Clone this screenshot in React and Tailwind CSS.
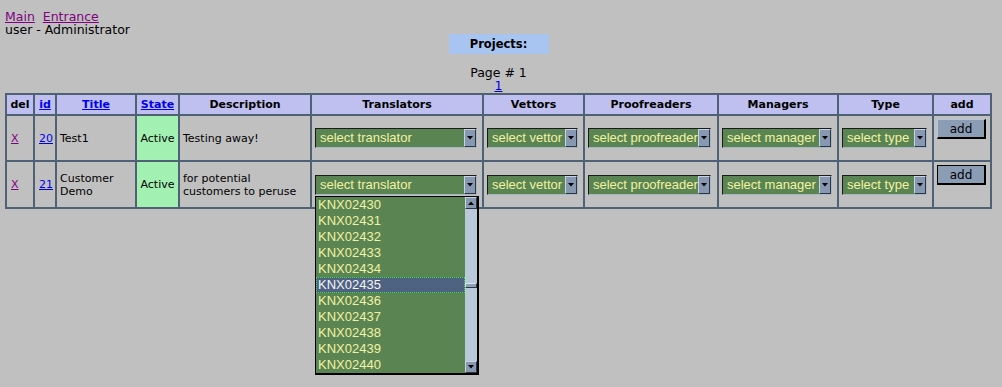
import React from 'react';

const translators = [
  'KNX02430', 'KNX02431', 'KNX02432', 'KNX02433', 'KNX02434', 'KNX02435',
  'KNX02436', 'KNX02437', 'KNX02438', 'KNX02439', 'KNX02440',
];

const cell = 'border border-[#4f6174] px-[3px]';

const ArrowDown = () => (
  <svg width="6" height="4" viewBox="0 0 6 4">
    <path d="M0 0h6L3 3.5z" fill="#000" />
  </svg>
);

const ArrowUp = () => (
  <svg width="6" height="4" viewBox="0 0 6 4">
    <path d="M0 4h6L3 0.5z" fill="#000" />
  </svg>
);

// looks like a native select, painted by hand
const FakeSelect = ({ label, width }) => (
  <div className={`flex h-[20px] ${width} border border-t-[#1b1b1b] border-l-[#1b1b1b] border-r-[#a6b6c6] border-b-[#a6b6c6] bg-[#5a8552]`}>
    <span className="flex-1 overflow-hidden whitespace-nowrap pl-[4px] font-['Liberation_Sans',sans-serif] text-[13px] leading-[18px] text-[#f2f2a2]">
      {label}
    </span>
    <span className="flex w-[12px] items-center justify-center border border-t-[#c6d4e2] border-l-[#c6d4e2] border-r-[#2e3640] border-b-[#2e3640] bg-[#8799b2]">
      <ArrowDown />
    </span>
  </div>
);

const ScrollButton = ({ children }) => (
  <div className="flex h-[12px] items-center justify-center border border-t-[#c6d4e2] border-l-[#c6d4e2] border-r-[#2e3640] border-b-[#2e3640] bg-[#8799b2]">
    {children}
  </div>
);

const TranslatorList = () => (
  <div className="absolute left-0 top-[21px] z-10 flex h-[179px] w-[164px] border border-black border-r-2 border-b-2 bg-[#5a8552]">
    <ul className="flex-1">
      {translators.map((t, i) =>
        i === 5 ? (
          <li
            key={t}
            className="h-[16px] border border-dotted border-[#3ae23a] bg-[#4e6282] pl-[1px] font-['Liberation_Sans',sans-serif] text-[13px] leading-[14px] text-[#f4f4f4]"
          >
            {t}
          </li>
        ) : (
          <li
            key={t}
            className="h-[16px] pl-[2px] font-['Liberation_Sans',sans-serif] text-[13px] leading-[16px] text-[#f2f2a2]"
          >
            {t}
          </li>
        )
      )}
    </ul>
    <div className="flex w-[12px] flex-col bg-[#b9c9d9]">
      <ScrollButton>
        <ArrowUp />
      </ScrollButton>
      <div className="flex-1 pt-[74px]">
        <div className="h-[5px] border border-t-[#d6e2ee] border-l-[#d6e2ee] border-r-[#2e3640] border-b-[#2e3640] bg-[#8d9fb8]" />
      </div>
      <ScrollButton>
        <ArrowDown />
      </ScrollButton>
    </div>
  </div>
);

const AddButton = ({ focused }) => (
  <button
    className={
      focused
        ? 'h-[20px] w-[49px] border border-black border-r-2 border-b-2 bg-[#8a9db5] text-[12px] leading-[16px] text-black'
        : 'h-[20px] w-[49px] border border-t-[#b4c4d6] border-l-[#b4c4d6] border-r-black border-b-black border-r-2 border-b-2 bg-[#8a9db5] text-[12px] leading-[16px] text-black'
    }
  >
    add
  </button>
);

const projects = [
  { id: 20, title: 'Test1', state: 'Active', desc: 'Testing away!' },
  { id: 21, title: 'Customer Demo', state: 'Active', desc: 'for potential customers to peruse', open: true },
];

export default function App() {
  return (
    <div className="min-h-[387px] bg-[#c0c0c0] pl-[5px] pr-[10px] pt-[10px] font-['DejaVu_Sans',sans-serif] text-black">
      {/* nav + user */}
      <div className="text-[12.5px] leading-[13px]">
        <a href="#" className="text-[#800080] underline">Main</a>
        &nbsp; <a href="#" className="text-[#800080] underline">Entrance</a>
        <div>user - Administrator</div>
      </div>

      <div className="mx-auto -mt-[2px] h-[20px] w-[100px] bg-[#a8c4f0] text-center text-[11.5px] font-bold leading-[20px]">
        Projects:
      </div>

      <div className="mt-[12px] text-center text-[12.5px] leading-[13px]">
        Page # 1
        <br />
        <a href="#" className="text-[#0000ee] underline">1</a>
      </div>

      <table className="mt-[1px] w-full table-fixed border-separate border-spacing-0 border border-[#4f6174] text-[11px] leading-[13px]">
        <colgroup>
          <col className="w-[28px]" />
          <col className="w-[22px]" />
          <col className="w-[80px]" />
          <col className="w-[43px]" />
          <col className="w-[132px]" />
          <col className="w-[172px]" />
          <col className="w-[101px]" />
          <col className="w-[134px]" />
          <col className="w-[120px]" />
          <col className="w-[95px]" />
          <col className="w-[58px]" />
        </colgroup>
        <thead>
          <tr className="h-[21px] bg-[#bfc0ef] text-center font-bold">
            <th className={cell}>del</th>
            <th className={cell}><a href="#" className="text-[#0000ee] underline">id</a></th>
            <th className={cell}><a href="#" className="text-[#0000ee] underline">Title</a></th>
            <th className={cell}><a href="#" className="text-[#0000ee] underline">State</a></th>
            <th className={cell}>Description</th>
            <th className={cell}>Translators</th>
            <th className={cell}>Vettors</th>
            <th className={cell}>Proofreaders</th>
            <th className={cell}>Managers</th>
            <th className={cell}>Type</th>
            <th className={cell}>add</th>
          </tr>
        </thead>
        <tbody>
          {projects.map((p) => (
            <tr key={p.id} className={p.open ? 'h-[47px]' : 'h-[46px]'}>
              <td className={`${cell} pl-[4px]`}>
                <a href="#" className="text-[#800080] underline">X</a>
              </td>
              <td className={`${cell} pl-[4px]`}>
                <a href="#" className="text-[#0000ee] underline">{p.id}</a>
              </td>
              <td className={cell}>{p.title}</td>
              <td className={`${cell} bg-[#a3f0b3] text-center`}>{p.state}</td>
              <td className={cell}>{p.desc}</td>
              <td className={cell}>
                <div className="relative w-[162px]">
                  <FakeSelect label="select translator" width="w-[162px]" />
                  {p.open && <TranslatorList />}
                </div>
              </td>
              <td className={cell}>
                <FakeSelect label="select vettor" width="w-[91px]" />
              </td>
              <td className={cell}>
                <FakeSelect label="select proofreader" width="w-[123px]" />
              </td>
              <td className={cell}>
                <FakeSelect label="select manager" width="w-[110px]" />
              </td>
              <td className={cell}>
                <FakeSelect label="select type" width="w-[85px]" />
              </td>
              <td className={`${cell} pt-[3px] align-top`}>
                <AddButton focused={p.open} />
              </td>
            </tr>
          ))}
        </tbody>
      </table>
    </div>
  );
}
